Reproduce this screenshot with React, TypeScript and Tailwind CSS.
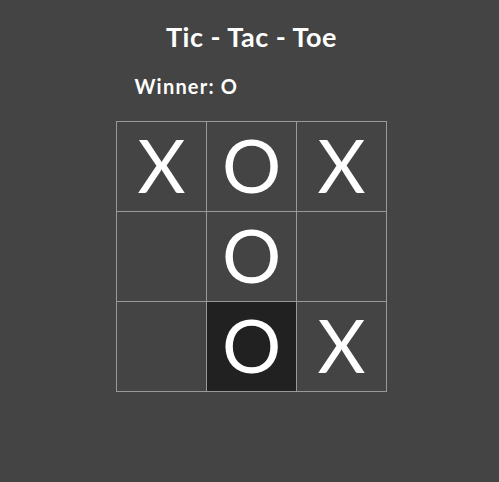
import React from 'react';

type Mark = 'X' | 'O' | null;

const board: Mark[] = ['X', 'O', 'X', null, 'O', null, null, 'O', 'X'];
// last move gets the dark highlight
const lastMove = 7;

function Square({ value, active }: { value: Mark; active: boolean }) {
  return (
    <div
      className={`flex h-[90px] w-[90px] items-center justify-center border-r border-b border-[#999999] pb-[4px] text-[74px] leading-none text-white ${
        active ? 'bg-[#212121]' : 'bg-[#444444]'
      }`}
    >
      {value}
    </div>
  );
}

export default function App() {
  return (
    <div className="min-h-[482px] bg-[#444444] font-['Lato',sans-serif] text-white">
      <div className="flex flex-col items-center pt-[20px]">
        <h1 className="ml-[4px] text-[27px] font-bold leading-[34px] tracking-[0.5px]">Tic - Tac - Toe</h1>
        <div className="mt-[20px] ml-[4px] w-[270px] pl-[18px] text-[20px] font-bold leading-[24px] tracking-[1.2px]">
          Winner: O
        </div>
        <div className="mt-[23px] ml-[4px] grid grid-cols-[repeat(3,90px)] border-t border-l border-[#999999]">
          {board.map((v, i) => (
            <Square key={i} value={v} active={i === lastMove} />
          ))}
        </div>
      </div>
    </div>
  );
}
